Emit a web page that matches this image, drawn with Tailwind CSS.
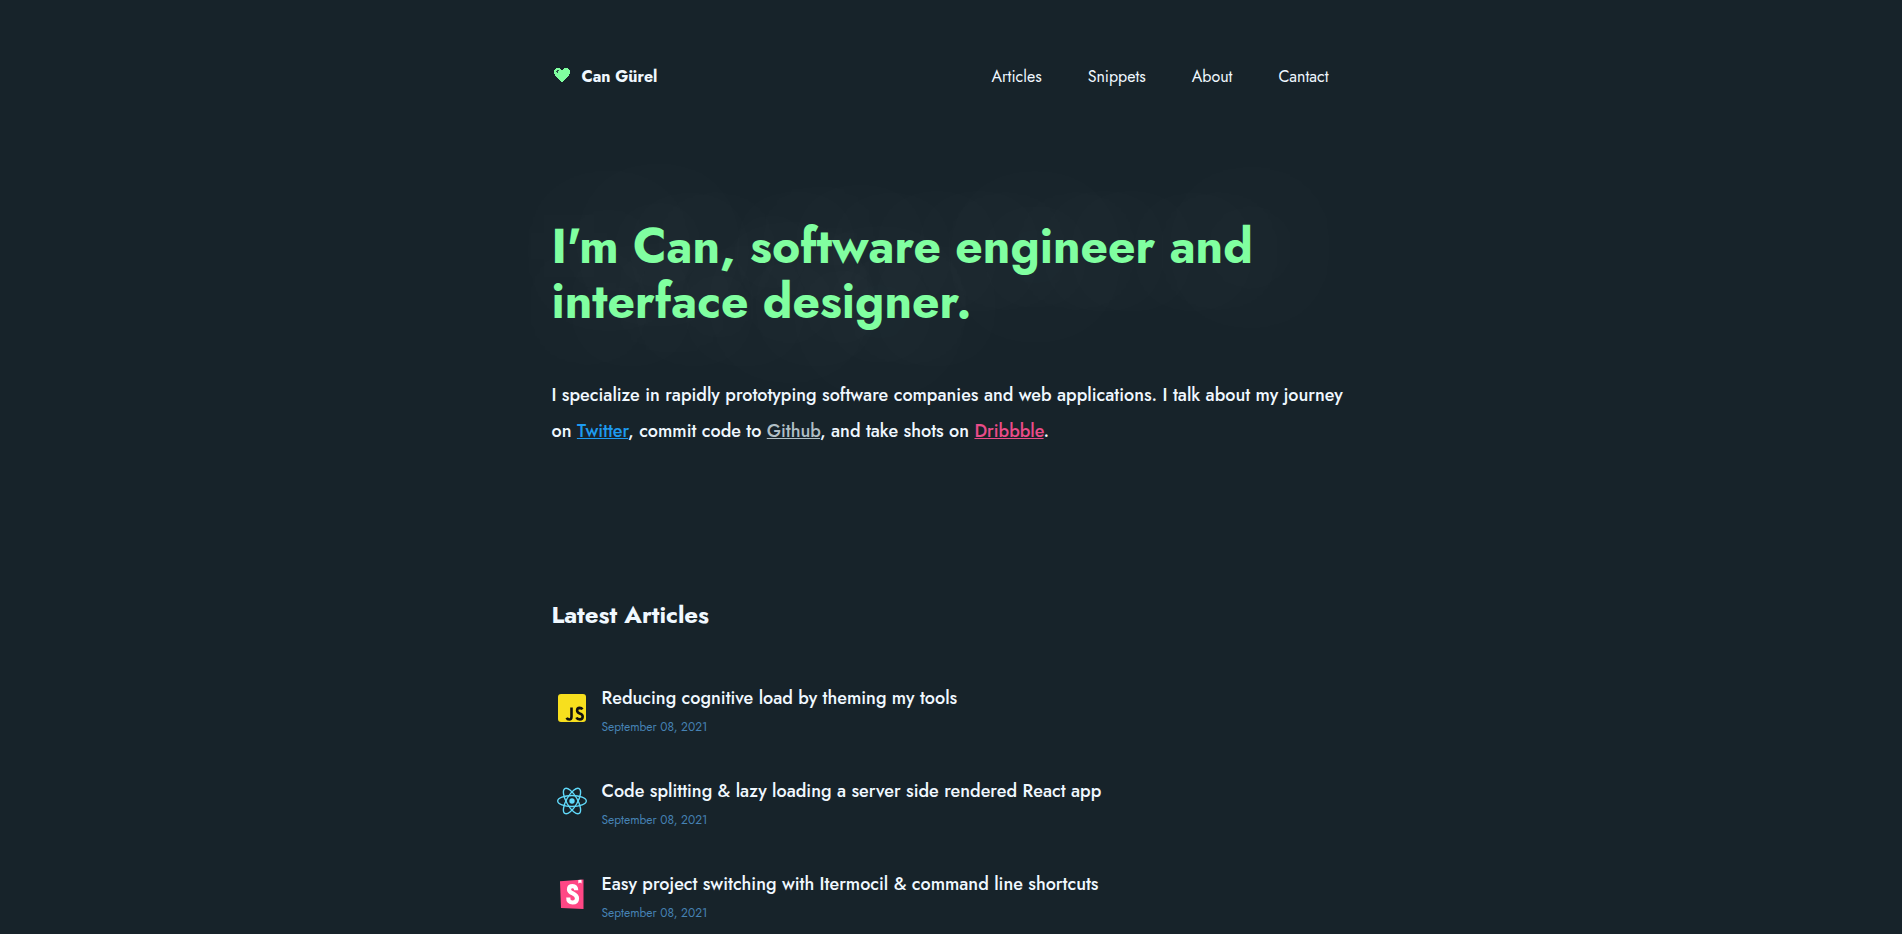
<!DOCTYPE html>
<html lang="en">
<head>
<meta charset="utf-8">
<meta name="viewport" content="width=device-width, initial-scale=1">
<title>Can Gürel</title>
<script src="https://cdn.jsdelivr.net/npm/@tailwindcss/browser@4"></script>
</head>
<body class="min-h-screen bg-[#17232a] font-['Jost','Lato',sans-serif] text-[#f0f8ff]">
<div class="mx-auto max-w-[799px] pt-[65px] pb-5">
  <header class="flex items-center justify-between">
    <a href="#" class="flex items-center gap-3 text-base leading-6 font-bold">
      <svg class="mb-1 ml-0.5 h-[14px] w-4" viewBox="0 0 16 14" fill="#80ffa0" aria-hidden="true"><path d="M2 0h4v1h1v1h2V1h1V0h4v1h1v1h1v4h-1v2h-1v1h-1v1h-1v1h-1v1h-1v1H9v1H7v-1H6v-1H5v-1H4v-1H3V9H2V8H1V6H0V2h1V1h1z"/><path fill="#2c5548" d="M3 2h2v1H4v2H3v-1H2V3h1z"/></svg>
      <span>Can Gürel</span>
    </a>
    <nav class="flex gap-[46px] px-[22px] text-base leading-6">
      <a href="#">Articles</a>
      <a href="#">Snippets</a>
      <a href="#">About</a>
      <a href="#">Cantact</a>
    </nav>
  </header>
  <main>
    <section class="mt-[130px]">
      <h1 class="text-[48px] leading-[55px] font-bold text-[#80ffa0] [text-shadow:10px_0_128px_#d8f4f0a0]">I'm Can, software engineer and<br>interface designer.</h1>
      <p class="mt-12 text-lg leading-9 font-medium">I specialize in rapidly prototyping software companies and web applications. I talk about my journey on <a href="#" class="text-[#1d9bf0] underline">Twitter</a>, commit code to <a href="#" class="text-[#b0bec5] underline">Github</a>, and take shots on <a href="#" class="text-[#ea4c89] underline">Dribbble</a>.</p>
    </section>
    <section class="mt-[150px]">
      <h2 class="text-2xl leading-8 font-bold">Latest Articles</h2>
      <ul class="mt-[53px] flex flex-col gap-10">
        <li class="flex gap-[14px]">
          <svg class="mt-2 ml-1 size-8 shrink-0" viewBox="0 0 32 32" aria-hidden="true"><rect x="2" y="2" width="28" height="28" rx="3" fill="#f7df1e"/><path d="M15.500 15.500v9.200q0 2.800-2.300 2.800-1.900 0-2.500-1.700M26.400 17.400q-.8-1.500-2.800-1.500-2.500.1-2.500 2.500 0 2 2.700 3.100 2.900 1 2.900 3.200-.1 2.700-2.900 2.700-2.500 0-3.400-1.900" fill="none" stroke="#111" stroke-width="2.600"/></svg>
          <div><a href="#" class="block text-lg leading-7 font-medium">Reducing cognitive load by theming my tools</a><time datetime="2021-09-08" class="mt-[5px] block text-xs leading-5 text-[#4682b4]">September 08, 2021</time></div>
        </li>
        <li class="flex gap-[14px]">
          <svg class="mt-2 ml-1 size-8 shrink-0" viewBox="0 0 32 32" fill="none" stroke="#61dafb" stroke-width="1.400" aria-hidden="true"><circle cx="16" cy="16" r="2.700" fill="#61dafb" stroke="none"/><ellipse cx="16" cy="16" rx="14.300" ry="5.500"/><ellipse cx="16" cy="16" rx="14.300" ry="5.500" transform="rotate(60 16 16)"/><ellipse cx="16" cy="16" rx="14.300" ry="5.500" transform="rotate(120 16 16)"/></svg>
          <div><a href="#" class="block text-lg leading-7 font-medium">Code splitting &amp; lazy loading a server side rendered React app</a><time datetime="2021-09-08" class="mt-[5px] block text-xs leading-5 text-[#4682b4]">September 08, 2021</time></div>
        </li>
        <li class="flex gap-[14px]">
          <svg class="mt-2 ml-1 size-8 shrink-0" viewBox="0 0 32 32" aria-hidden="true"><path d="M4 3.200 27.500 1.500V31L5 30z" fill="#ff4785"/><path d="M22.300 1.900l3.200-.2.100 3.800-1.500-1.100-1.800 1z" fill="#fff"/><path d="M20.200 12.200c0-3-1.200-4-3.500-4s-3.700 1-3.700 3.200c0 4.600 8 3.500 8 8.800 0 2.900-1.800 4.300-4.400 4.300-2.800 0-4.500-1.400-4.300-5" fill="none" stroke="#fff" stroke-width="4.200"/></svg>
          <div><a href="#" class="block text-lg leading-7 font-medium">Easy project switching with Itermocil &amp; command line shortcuts</a><time datetime="2021-09-08" class="mt-[5px] block text-xs leading-5 text-[#4682b4]">September 08, 2021</time></div>
        </li>
      </ul>
    </section>
  </main>
</div>
</body>
</html>
